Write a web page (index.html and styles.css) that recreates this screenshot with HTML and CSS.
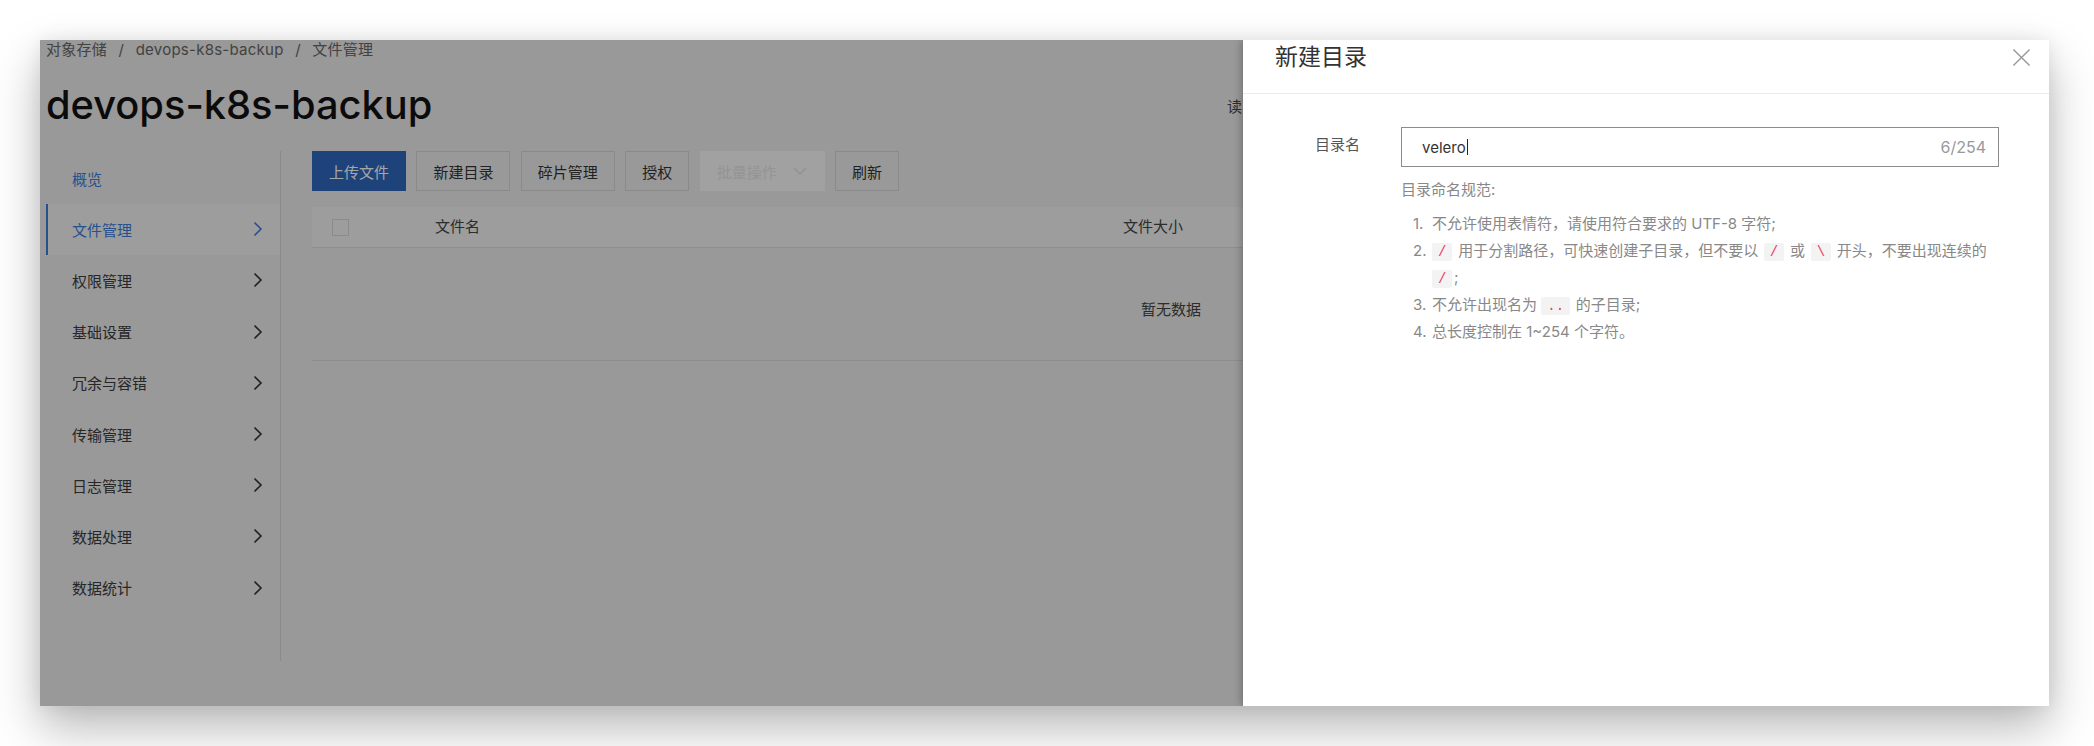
FILE: index.html
```html
<!DOCTYPE html>
<html lang="zh-CN">
<head>
<meta charset="utf-8">
<title>devops-k8s-backup - 文件管理</title>
<link rel="stylesheet" href="styles.css">
</head>
<body>
<div class="screen">
  <div class="window">
    <div class="page">
      <nav class="breadcrumb">
        <span>对象存储</span><span class="sep">/</span><span>devops-k8s-backup</span><span class="sep">/</span><span>文件管理</span>
      </nav>
      <div class="title-row">
        <h1 class="title">devops-k8s-backup</h1>
        <div class="meta">读写权限：私有</div>
      </div>
      <div class="main">
        <aside class="sidebar">
          <div class="nav-item link">概览</div>
          <div class="nav-item active">文件管理<svg class="chev" viewBox="0 0 10 16"><path d="M1.5 1.5 L8 8 L1.5 14.5"/></svg></div>
          <div class="nav-item">权限管理<svg class="chev" viewBox="0 0 10 16"><path d="M1.5 1.5 L8 8 L1.5 14.5"/></svg></div>
          <div class="nav-item">基础设置<svg class="chev" viewBox="0 0 10 16"><path d="M1.5 1.5 L8 8 L1.5 14.5"/></svg></div>
          <div class="nav-item">冗余与容错<svg class="chev" viewBox="0 0 10 16"><path d="M1.5 1.5 L8 8 L1.5 14.5"/></svg></div>
          <div class="nav-item">传输管理<svg class="chev" viewBox="0 0 10 16"><path d="M1.5 1.5 L8 8 L1.5 14.5"/></svg></div>
          <div class="nav-item">日志管理<svg class="chev" viewBox="0 0 10 16"><path d="M1.5 1.5 L8 8 L1.5 14.5"/></svg></div>
          <div class="nav-item">数据处理<svg class="chev" viewBox="0 0 10 16"><path d="M1.5 1.5 L8 8 L1.5 14.5"/></svg></div>
          <div class="nav-item">数据统计<svg class="chev" viewBox="0 0 10 16"><path d="M1.5 1.5 L8 8 L1.5 14.5"/></svg></div>
        </aside>
        <section class="content">
          <div class="toolbar">
            <button class="btn primary">上传文件</button>
            <button class="btn">新建目录</button>
            <button class="btn">碎片管理</button>
            <button class="btn">授权</button>
            <button class="btn disabled">批量操作<svg class="down" viewBox="0 0 14 8"><path d="M1 1 L7 7 L13 1"/></svg></button>
            <button class="btn">刷新</button>
          </div>
          <div class="table">
            <div class="thead">
              <div class="cell check"><span class="checkbox"></span></div>
              <div class="cell">文件名</div>
              <div class="cell">文件大小</div>
            </div>
            <div class="empty">暂无数据</div>
          </div>
        </section>
      </div>
    </div>
    <div class="mask"></div>
    <aside class="drawer">
      <div class="drawer-head">
        <h2 class="drawer-title">新建目录</h2>
        <span class="close"><svg viewBox="0 0 20 20"><path d="M1.5 1.5 L18.5 18.5 M18.5 1.5 L1.5 18.5"/></svg></span>
      </div>
      <div class="drawer-body">
        <div class="form-row">
          <div class="label">目录名</div>
          <div class="field">
            <div class="input"><span class="value">velero</span><span class="caret"></span><span class="count">6/254</span></div>
            <div class="rules-title">目录命名规范:</div>
            <ol class="rules">
              <li><span class="num">1.</span><span class="txt">不允许使用表情符，请使用符合要求的 UTF-8 字符;</span></li>
              <li><span class="num">2.</span><span class="txt"><code>/</code> 用于分割路径，可快速创建子目录，但不要以 <code>/</code> 或 <code>\</code> 开头，不要出现连续的 <span class="nw"><code>/</code>;</span></span></li>
              <li><span class="num">3.</span><span class="txt">不允许出现名为 <code>..</code> 的子目录;</span></li>
              <li><span class="num">4.</span><span class="txt">总长度控制在 1~254 个字符。</span></li>
            </ol>
          </div>
        </div>
      </div>
    </aside>
  </div>
</div>
</body>
</html>
```

FILE: styles.css
```css
html, body {
  margin: 0;
  padding: 0;
}

body {
  background: #ffffff;
  font-family: Inter, "Noto Sans CJK SC", sans-serif;
  width: 2094px;
  height: 746px;
  overflow: hidden;
}

.screen {
  box-sizing: border-box;
  height: 746px;
  padding: 40px 45px 0 40px;
}

.window {
  position: relative;
  height: 666px;
  background: #ebebeb;
  overflow: hidden;
  box-shadow: 0 22px 45px rgba(0, 0, 0, 0.28), 0 0 18px rgba(0, 0, 0, 0.08);
}

/* ---------- page under the mask ---------- */
.page {
  padding-left: 6px;
}

.breadcrumb {
  display: flex;
  font-size: 15px;
  line-height: 20px;
  letter-spacing: 0.25px;
  color: #666;
}

.breadcrumb .sep {
  margin: 0 11.5px;
}

.title-row {
  display: flex;
  align-items: center;
  height: 52px;
  margin-top: 19px;
}

.title {
  margin: 0;
  width: 1181px;
  flex: 0 0 1181px;
  font-size: 39.8px;
  font-weight: 500;
  line-height: 52px;
  color: #111;
}

.meta {
  font-size: 15px;
  color: #444;
  white-space: nowrap;
}

.main {
  display: flex;
  margin-top: 20px;
}

.sidebar {
  flex: 0 0 234px;
  width: 234px;
  height: 508.5px;
  padding-top: 1.5px;
  border-right: 1px solid #d4d4d4;
}

.nav-item {
  display: flex;
  align-items: center;
  justify-content: space-between;
  height: 51.2px;
  padding: 0 17px 0 26px;
  font-size: 15px;
  color: #3c3c3c;
}

.nav-item.link {
  color: #3e7bd7;
}

.nav-item.active {
  background: #f2f2f2;
  border-left: 2px solid #3e7bd7;
  padding-left: 24px;
  color: #3e7bd7;
}

.chev {
  width: 10px;
  height: 16px;
  fill: none;
  stroke: #333;
  stroke-width: 1.6;
}

.nav-item.active .chev {
  stroke: #3e7bd7;
}

.content {
  flex: 1;
  margin-left: 31px;
  padding-right: 19px;
}

.toolbar {
  display: flex;
  gap: 10.4px;
  height: 40px;
}

.btn {
  display: flex;
  align-items: center;
  box-sizing: border-box;
  height: 40px;
  padding: 0 16px;
  border: 1px solid #d4d4d4;
  background: transparent;
  font: inherit;
  font-size: 15px;
  color: #333;
  border-radius: 0;
}

.btn.primary {
  background: #2e66bc;
  border-color: #2e66bc;
  color: #fff;
}

.btn.disabled {
  gap: 16px;
  padding-right: 17px;
  background: #f8f8f8;
  border-color: #f8f8f8;
  color: #e4e4e4;
}

.down {
  width: 14px;
  height: 8px;
  fill: none;
  stroke: #dedede;
  stroke-width: 1.3;
}

.table {
  margin-top: 16px;
}

.thead {
  display: grid;
  grid-template-columns: 123px 688px 1fr;
  align-items: center;
  box-sizing: border-box;
  height: 41px;
  background: #f2f2f2;
  border-bottom: 1px solid #d9d9d9;
  font-size: 15px;
  line-height: 20px;
  color: #444;
}

.cell.check {
  padding-left: 20px;
  display: flex;
}

.checkbox {
  display: block;
  box-sizing: border-box;
  width: 17px;
  height: 17px;
  border: 1px solid #d4d4d4;
}

.empty {
  box-sizing: border-box;
  height: 113px;
  padding-top: 52px;
  border-bottom: 1px solid #d9d9d9;
  text-align: center;
  font-size: 15px;
  line-height: 20px;
  color: #444;
}

/* ---------- modal mask & drawer ---------- */
.mask {
  position: absolute;
  inset: 0;
  background: rgba(0, 0, 0, 0.35);
}

.drawer {
  position: absolute;
  top: 0;
  right: 0;
  bottom: 0;
  width: 806px;
  background: #fff;
  box-shadow: -2px 0 7px rgba(0, 0, 0, 0.25);
}

.drawer-head {
  display: flex;
  justify-content: space-between;
  box-sizing: border-box;
  height: 54px;
  padding: 0 18px 0 32px;
  border-bottom: 1px solid #ebebeb;
}

.drawer-title {
  margin: 0;
  font-size: 23px;
  font-weight: 400;
  line-height: 34px;
  color: #333;
}

.close {
  display: flex;
  align-items: center;
  height: 34px;
}

.close svg {
  width: 19px;
  height: 19px;
  fill: none;
  stroke: #999;
  stroke-width: 1.5;
}

.drawer-body {
  padding: 33px 50px 0 32px;
}

.form-row {
  display: grid;
  grid-template-columns: 126px 1fr;
}

.label {
  padding-left: 40px;
  font-size: 15px;
  line-height: 36px;
  color: #555;
}

.input {
  display: flex;
  align-items: center;
  box-sizing: border-box;
  height: 40px;
  padding: 0 12px 0 20px;
  border: 1px solid #8c8c8c;
  font-size: 15px;
}

.value {
  color: #333;
}

.caret {
  width: 1px;
  height: 16px;
  margin-left: 1px;
  background: #222;
}

.count {
  margin-left: auto;
  font-size: 16px;
  color: #999;
}

.rules-title {
  margin-top: 11px;
  font-size: 15px;
  line-height: 24px;
  color: #888;
}

.rules {
  list-style: none;
  margin: 8px 0 0;
  padding: 0;
  font-size: 15px;
  line-height: 27px;
  color: #888;
}

.rules li {
  display: flex;
}

.rules .num {
  flex: 0 0 31px;
  box-sizing: border-box;
  padding-left: 12px;
}

.rules .txt {
  flex: 1;
}

.rules .nw {
  white-space: nowrap;
}

.rules code {
  display: inline-block;
  margin: 0 1.5px;
  padding: 0 6px;
  font-family: "Liberation Mono", monospace;
  font-size: 14px;
  line-height: 18px;
  vertical-align: middle;
  background: #f3f3f3;
  color: #e4405f;
  border-radius: 2px;
}

.rules .txt > code:first-child,
.rules .nw > code {
  margin-left: 0;
}
```
